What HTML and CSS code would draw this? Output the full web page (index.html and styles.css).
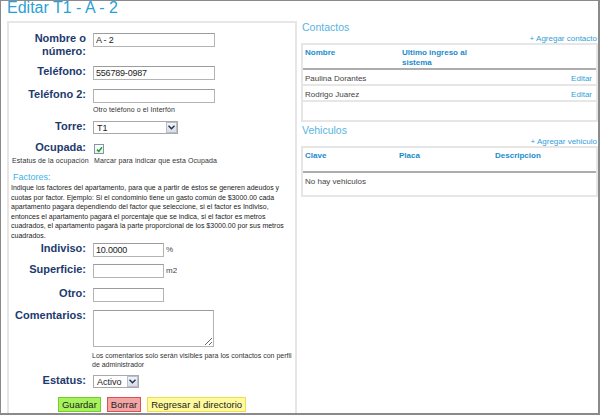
FILE: index.html
```html
<!DOCTYPE html>
<html lang="es">
<head>
  <meta charset="UTF-8" />
  <title>Editar T1 - A - 2</title>
  <link rel="stylesheet" href="styles.css">
</head>
<body>
  <div class="page">
    <h1 class="title">Editar T1 - A - 2</h1>
    <div class="cols">
      <form class="form-box">
        <div class="row">
          <label for="nombre">Nombre o número:</label>
          <div class="field"><input id="nombre" class="txt" type="text" value="A - 2"></div>
        </div>
        <div class="row gap-8">
          <label for="tel">Teléfono:</label>
          <div class="field"><input id="tel" class="txt" type="text" value="556789-0987"></div>
        </div>
        <div class="row gap-6">
          <label for="tel2">Teléfono 2:</label>
          <div class="field">
            <input id="tel2" class="txt" type="text" value="">
            <div class="hint">Otro teléfono o el Interfón</div>
          </div>
        </div>
        <div class="row">
          <label>Torre:</label>
          <div class="field">
            <div class="select sel-torre"><span>T1</span><i class="arrow"><svg width="7" height="5" viewBox="0 0 7 5"><path d="M0.5 0.8 L3.5 3.8 L6.5 0.8" fill="none" stroke="#1f2f55" stroke-width="1.4"/></svg></i></div>
          </div>
        </div>
        <div class="row row-ocupada">
          <label>Ocupada:</label>
          <div class="field">
            <span class="check"><svg width="7" height="7" viewBox="0 0 7 7"><path d="M1 3.6 L2.8 5.4 L6 1.2" fill="none" stroke="#21a021" stroke-width="1.5"/></svg></span>
          </div>
          <div class="hint hint-left">Estatus de la ocupación</div>
          <div class="hint hint-right">Marcar para indicar que esta Ocupada</div>
        </div>

        <div class="factores">Factores:</div>
        <p class="factores-txt">Indique los factores del apartamento, para que a partir de éstos se generen adeudos y<br>cuotas por factor. Ejemplo: Si el condominio tiene un gasto común de $3000.00 cada<br>apartamento pagara dependiendo del factor que seleccione, si el factor es Indiviso,<br>entonces el apartamento pagará el porcentaje que se indica, si el factor es metros<br>cuadrados, el apartamento pagará la parte proporcional de los $3000.00 por sus metros<br>cuadrados.</p>

        <div class="row gap-6">
          <label for="indiviso">Indiviso:</label>
          <div class="field"><input id="indiviso" class="txt short" type="text" value="10.0000"><span class="unit">%</span></div>
        </div>
        <div class="row gap-9">
          <label for="sup">Superficie:</label>
          <div class="field"><input id="sup" class="txt short" type="text" value=""><span class="unit">m2</span></div>
        </div>
        <div class="row">
          <label for="otro">Otro:</label>
          <div class="field"><input id="otro" class="txt short" type="text" value=""></div>
        </div>
        <div class="row gap-5">
          <label for="coment">Comentarios:</label>
          <div class="field">
            <textarea id="coment" class="area"></textarea>
            <div class="hint hint-coment">Los comentarios solo serán visibles para los contactos con perfil<br>de administrador</div>
          </div>
        </div>
        <div class="row gap-9">
          <label>Estatus:</label>
          <div class="field">
            <div class="select sel-estatus"><span>Activo</span><i class="arrow"><svg width="7" height="5" viewBox="0 0 7 5"><path d="M0.5 0.8 L3.5 3.8 L6.5 0.8" fill="none" stroke="#1f2f55" stroke-width="1.4"/></svg></i></div>
          </div>
        </div>
        <div class="buttons">
          <button type="button" class="btn btn-green">Guardar</button>
          <button type="button" class="btn btn-red">Borrar</button>
          <button type="button" class="btn btn-yellow">Regresar al directorio</button>
        </div>
      </form>

      <div class="side">
        <h2>Contactos</h2>
        <div class="add"><a href="#">+ Agregar contacto</a></div>
        <div class="tbl-box box-contactos">
          <table class="tbl">
            <tr>
              <th class="c-nombre">Nombre</th>
              <th class="c-ingreso">Ultimo ingreso al sistema</th>
              <th></th>
            </tr>
            <tr>
              <td>Paulina Dorantes</td>
              <td></td>
              <td class="edit"><a href="#">Editar</a></td>
            </tr>
            <tr>
              <td>Rodrigo Juarez</td>
              <td></td>
              <td class="edit"><a href="#">Editar</a></td>
            </tr>
          </table>
        </div>

        <h2 class="h-veh">Vehiculos</h2>
        <div class="add"><a href="#">+ Agregar vehiculo</a></div>
        <div class="tbl-box box-vehiculos">
          <table class="tbl">
            <tr>
              <th class="c-clave tall">Clave</th>
              <th class="c-placa tall">Placa</th>
              <th class="tall">Descripcion</th>
            </tr>
            <tr>
              <td class="empty" colspan="3">No hay vehiculos</td>
            </tr>
          </table>
        </div>
      </div>
    </div>
  </div>
</body>
</html>
```

FILE: styles.css
```css
body {
  margin: 0;
  font-family: "Liberation Sans", Arial, sans-serif;
  background: #fff;
}
.page {
  width: 600px;
  height: 415px;
  box-sizing: border-box;
  border: 1px solid #8a8a8a;
  border-right-width: 2px;
  border-bottom-width: 2px;
  padding-left: 6px;
  overflow: hidden;
}
.title {
  margin: 0 0 6px;
  font-size: 16px;
  font-weight: normal;
  line-height: 14px;
  color: #2b9fd8;
}
.cols {
  display: flex;
  gap: 4px;
  align-items: flex-start;
}

/* formulario */
.form-box {
  width: 290px;
  height: 420px;
  box-sizing: border-box;
  border: 2px solid #e6e6e6;
  padding-top: 9px;
}
.row {
  display: grid;
  grid-template-columns: 77px 1fr;
  column-gap: 7px;
  margin-bottom: 7px;
}
.row.gap-5 { margin-bottom: 5px; }
.row.gap-6 { margin-bottom: 6px; }
.row.gap-8 { margin-bottom: 8px; }
.row.gap-9 { margin-bottom: 9px; }
.row label {
  font-size: 11px;
  font-weight: bold;
  line-height: 13px;
  text-align: right;
  color: #1d3a6f;
}
.field {
  padding-top: 1px;
  font-size: 8px;
  color: #333;
}
.txt {
  display: block;
  width: 122px;
  height: 14px;
  box-sizing: border-box;
  margin: 0;
  padding: 0 2px;
  border: 1px solid #b4b4b4;
  border-top-color: #9c9c9c;
  font-family: "Liberation Sans", Arial, sans-serif;
  font-size: 9px;
  letter-spacing: -0.2px;
  color: #222;
}
.txt.short {
  display: inline-block;
  width: 71px;
  vertical-align: top;
}
.unit {
  display: inline-block;
  margin-left: 2px;
  line-height: 14px;
  vertical-align: top;
  color: #444;
}
.hint {
  font-size: 7px;
  line-height: 9px;
  color: #333;
  margin-top: 2px;
  letter-spacing: 0.1px;
}
.select {
  display: flex;
  align-items: center;
  justify-content: space-between;
  height: 13px;
  box-sizing: border-box;
  border: 1px solid #a9a9a9;
  padding-left: 3px;
  font-size: 9px;
  color: #222;
}
.sel-torre { width: 85px; }
.sel-estatus { width: 46px; }
.select .arrow {
  display: flex;
  align-items: center;
  justify-content: center;
  width: 11px;
  height: 11px;
  box-sizing: border-box;
  border: 1px solid #b8c0cc;
  background: linear-gradient(#f2f4f7, #d8dde4);
}
.row-ocupada {
  row-gap: 2px;
}
.check {
  display: flex;
  align-items: center;
  justify-content: center;
  width: 8px;
  height: 8px;
  margin: 2px 0 0 1px;
  border: 1px solid #8495ab;
  background: linear-gradient(#fff, #e9eef3);
}
.hint-left {
  margin: 0;
  padding-left: 3px;
  white-space: nowrap;
}
.hint-right {
  margin: 0;
  padding-left: 1px;
}
.factores {
  margin-top: 5px;
  padding-left: 4px;
  font-size: 9px;
  line-height: 11px;
  color: #3cb2ea;
}
.factores-txt {
  margin: 0 0 2px;
  padding-left: 2px;
  font-size: 7px;
  line-height: 9.5px;
  color: #222;
  white-space: nowrap;
}
.area {
  display: block;
  width: 121px;
  height: 37px;
  box-sizing: border-box;
  margin: 0;
  border: 1px solid #b4b4b4;
  border-top-color: #9c9c9c;
}
.hint-coment {
  margin-top: 4px;
  margin-left: -1px;
  letter-spacing: 0;
}
.buttons {
  display: flex;
  justify-content: center;
  gap: 6px;
}
.btn {
  height: 15px;
  padding: 0 3px;
  font-family: "Liberation Sans", Arial, sans-serif;
  font-size: 9.5px;
  line-height: 13px;
  color: #222;
  border: 1px solid;
}
.btn-green { background: #a6f25a; border-color: #73cc34; }
.btn-red { background: #f3a5a5; border-color: #d9504f; }
.btn-yellow { background: #fffa9c; border-color: #f1da56; }

/* columna derecha */
.side {
  width: 297px;
}
.side h2 {
  margin: 0;
  padding-left: 1px;
  font-size: 10.5px;
  font-weight: normal;
  line-height: 13px;
  color: #58b3e2;
}
.side h2.h-veh {
  margin-top: 2px;
}
.add {
  padding-right: 1px;
  text-align: right;
  font-size: 8px;
  line-height: 9px;
}
.add a,
.edit a {
  color: #33a0da;
  text-decoration: none;
}
.tbl-box {
  border: 2px solid #e6e6e6;
}
.box-contactos { padding-bottom: 18px; }
.box-vehiculos { padding-bottom: 8px; }
.tbl {
  width: 100%;
  border-collapse: separate;
  border-spacing: 0;
  table-layout: fixed;
  font-size: 8px;
  line-height: 10px;
}
.tbl th {
  padding: 3px 2px 0;
  text-align: left;
  vertical-align: top;
  font-weight: bold;
  color: #1b8bcc;
  border-bottom: 2px solid #adadad;
}
.tbl th.tall { padding-bottom: 10px; }
.c-nombre { width: 93px; }
.c-ingreso { width: 92px; }
.c-clave { width: 90px; }
.c-placa { width: 92px; }
.tbl td {
  padding: 4px 2px 0;
  color: #444;
  border-bottom: 2px solid #e6e6e6;
}
.tbl td.edit {
  text-align: right;
  padding-right: 4px;
}
.tbl td.empty {
  border-bottom: 0;
}
```
